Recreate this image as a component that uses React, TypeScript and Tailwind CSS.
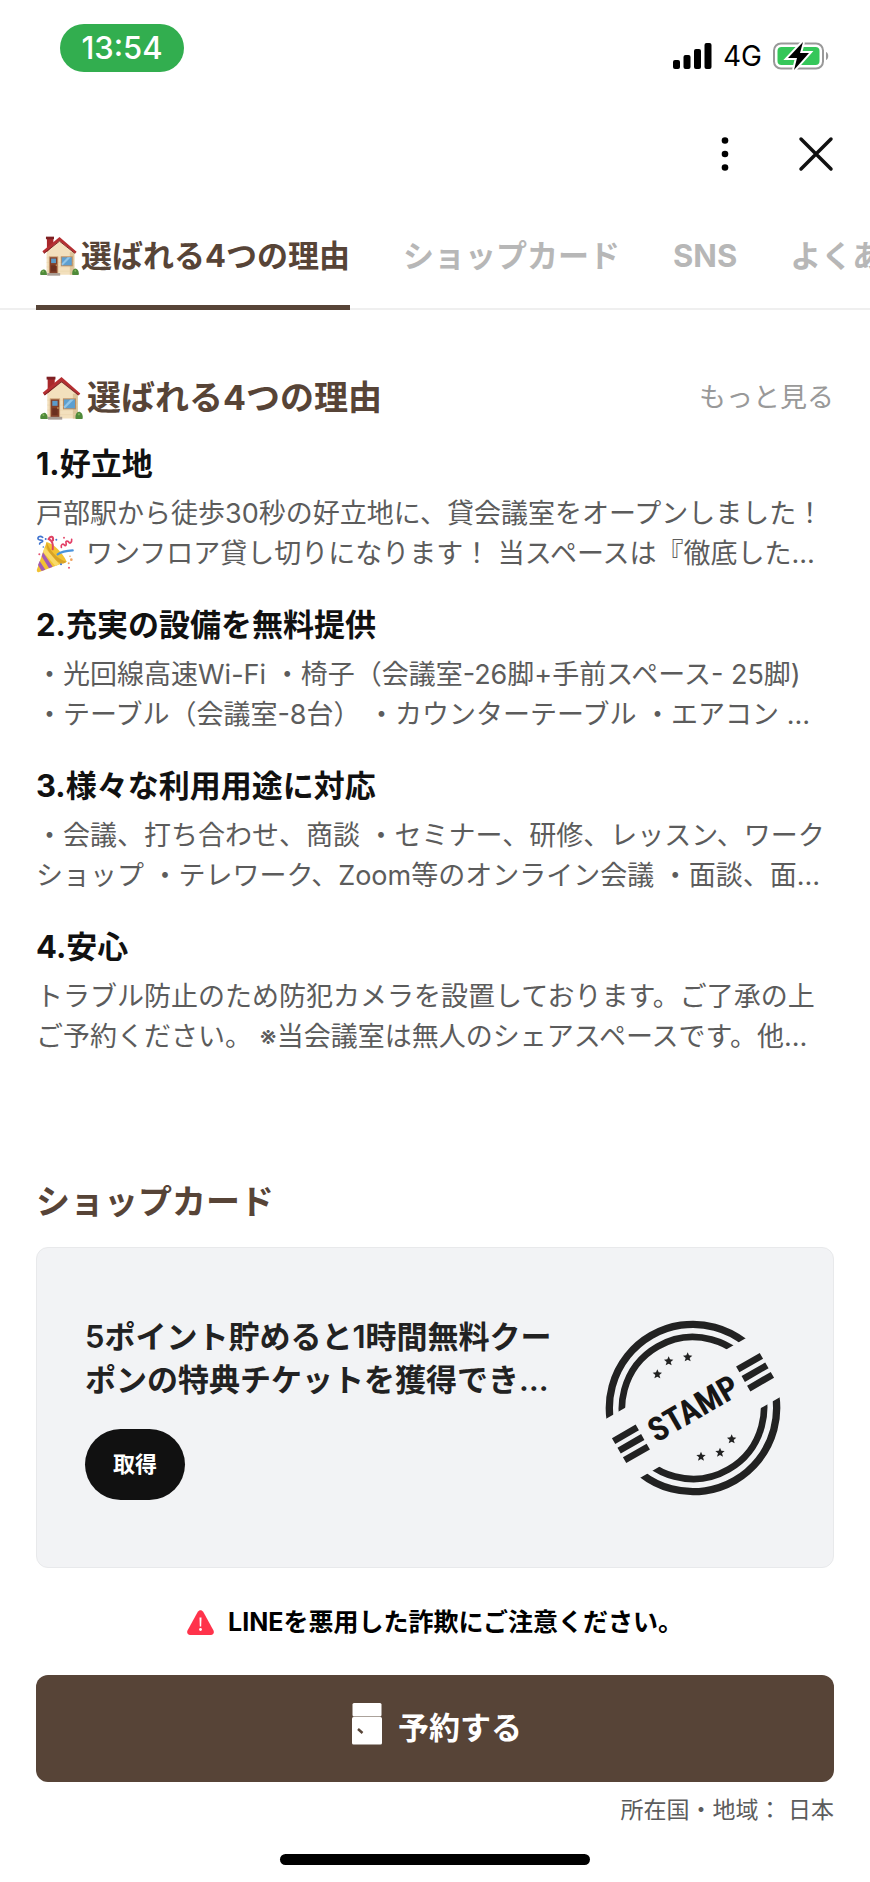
import { useState } from 'react';

const tabs = ['選ばれる4つの理由', 'ショップカード', 'SNS', 'よくある質問'];

const reasons = [
  {
    title: '1.好立地',
    lines: [
      '戸部駅から徒歩30秒の好立地に、貸会議室をオープンしました！',
      'ワンフロア貸し切りになります！ 当スペースは『徹底した…',
    ],
    party: true,
  },
  {
    title: '2.充実の設備を無料提供',
    lines: [
      '・光回線高速Wi-Fi ・椅子（会議室-26脚+手前スペース- 25脚)',
      '・テーブル（会議室-8台） ・カウンターテーブル ・エアコン …',
    ],
  },
  {
    title: '3.様々な利用用途に対応',
    lines: [
      '・会議、打ち合わせ、商談 ・セミナー、研修、レッスン、ワーク',
      'ショップ ・テレワーク、Zoom等のオンライン会議 ・面談、面…',
    ],
  },
  {
    title: '4.安心',
    lines: [
      'トラブル防止のため防犯カメラを設置しております。ご了承の上',
      'ご予約ください。 ※当会議室は無人のシェアスペースです。他…',
    ],
  },
];

const HouseIcon = ({ className }: { className: string }) => (
  <svg viewBox="26 30 120 124" className={className} aria-hidden="true">
    <path d="M47 35h20v30L47 82z" fill="#a8292b" />
    <path d="M44 32h25v8H44z" fill="#7e2023" />
    <path d="M46 80 86 42l46 38v70H46z" fill="#f3e0bd" />
    <path d="M118 80h14v70h-14z" fill="#dcc49a" />
    <path d="M46 98h86M46 112h86M46 126h86M46 139h86" stroke="#e6d0a8" strokeWidth="1.5" />
    <path d="M33 77 86 33l53 46-4 5-49-39-48 39z" fill="#b62f32" />
    <path d="M38 84 86 46l48 38" fill="none" stroke="#7c2122" strokeWidth="3" />
    <path d="M53 93h29v53H53z" fill="#c99e73" />
    <path d="M56 96h23v50H56z" fill="#834028" />
    <path d="M60 100h15v14H60z" fill="#5b9bc9" />
    <path d="M60 121h15v19H60z" fill="#6b301f" />
    <circle cx="76" cy="120" r="2" fill="#efc36c" />
    <path d="M90 93h37v31H90z" fill="#b98b60" />
    <path d="M93 96h31v25H93z" fill="#5d9fd0" />
    <path d="m93 115 18-19h10L96 121h-3z" fill="#91c5e8" />
    <path d="M48 145h40v8H48z" fill="#a89d95" />
    <path d="M27 151c-3-9 2-16 9-17 6-1 12 6 11 17z" fill="#4f8a3a" />
    <path d="M126 151c-2-9 1-19 9-20 8 0 13 11 10 20z" fill="#4f8a3a" />
    <circle cx="35" cy="140" r="3" fill="#7fb357" />
    <circle cx="135" cy="138" r="3" fill="#7fb357" />
  </svg>
);

const PartyIcon = () => (
  <svg
    viewBox="22 26 114 114"
    className="mr-3 inline-block size-[38px] align-middle"
    aria-hidden="true"
  >
    <path d="M54 47c20 5 48 32 60 59L32 137c-6 2-9-2-7-8z" fill="#f2c233" />
    <path d="M54 47c8 24 30 51 60 59-9 8-20 7-33-4-17-15-31-39-27-55z" fill="#d9a326" />
    <path d="m48 63 44 51-12 5-37-42z" fill="#f9da68" />
    <path d="m43 78 29 43-11 5-22-36zM33 104l17 26-11 4-11-18z" fill="#a35bb4" />
    <path
      d="M42 33c-9-6-17 0-13 6 4 5 12 0 13 5s-10 3-9 9"
      fill="none"
      stroke="#3f73cf"
      strokeWidth="5"
      strokeLinecap="round"
    />
    <path
      d="M72 69c2-12-1-26-12-31 5-11 15-8 13 4"
      fill="none"
      stroke="#df4264"
      strokeWidth="6"
      strokeLinecap="round"
    />
    <path
      d="M98 63c-2-9 5-12 9-7s7-1 5-7 7-6 9-1 9 1 8-9"
      fill="none"
      stroke="#e33e66"
      strokeWidth="5"
      strokeLinecap="round"
    />
    <path
      d="M87 84c11-8 27-11 45-12"
      fill="none"
      stroke="#4b94dc"
      strokeWidth="7"
      strokeLinecap="round"
    />
    <g fill="#e55271">
      <circle cx="106" cy="34" r="3" />
      <circle cx="32" cy="84" r="3" />
      <circle cx="121" cy="124" r="3" />
    </g>
    <g fill="#4273cf">
      <circle cx="83" cy="40" r="3" />
      <circle cx="51" cy="38" r="3" />
      <circle cx="97" cy="114" r="3" />
      <circle cx="44" cy="62" r="2.5" />
    </g>
    <g fill="#efa35f">
      <circle cx="128" cy="100" r="4" />
      <circle cx="120" cy="111" r="3" />
      <circle cx="124" cy="90" r="2.5" />
    </g>
  </svg>
);

const stars = [
  [232, 249],
  [266, 210],
  [323, 198],
  [363, 496],
  [420, 484],
  [455, 444],
];

const StampIcon = () => (
  <svg
    viewBox="72 84 534 534"
    className="size-[178px] shrink-0"
    role="img"
    aria-label="STAMP"
  >
    <defs>
      <clipPath id="stampBand">
        <path d="M-300-300h600v198h-600zM-300 102h600v198h-600z" />
      </clipPath>
    </defs>
    <g transform="translate(339 351) rotate(-30)">
      <g fill="none" stroke="#222" clipPath="url(#stampBand)">
        <circle r="251" strokeWidth="22" />
        <circle r="213" strokeWidth="20" />
      </g>
      <path
        d="M174-33h82M174 0h82M174 33h82M-256-33h82M-256 0h82M-256 33h82"
        stroke="#222"
        strokeWidth="20"
      />
      <text
        y="36"
        textAnchor="middle"
        fill="#161616"
        className="font-['Liberation_Sans_Narrow','Roboto_Condensed','Roboto','Liberation_Sans',sans-serif] text-[100px] font-bold"
      >
        STAMP
      </text>
    </g>
    {stars.map(([x, y]) => (
      <path
        key={x}
        transform={`translate(${x} ${y})`}
        d="M0-14 4-5 14-4 6 3 9 13 0 8-9 13-6 3-14-4-4-5z"
        fill="#222"
      />
    ))}
  </svg>
);

const StatusBar = () => (
  <div className="flex h-24 items-start justify-between pt-6 pr-10 pl-[60px]">
    <div className="flex h-12 w-[124px] items-center justify-center rounded-full bg-[#32ae4f] text-[31px] font-medium text-white">
      13:54
    </div>
    <div className="flex h-16 items-center gap-[11px]">
      <svg viewBox="0 0 39 26" className="h-[26px] w-[39px]" aria-hidden="true">
        <rect y="17" width="7" height="9" rx="2" />
        <rect x="10.5" y="12" width="7" height="14" rx="2" />
        <rect x="21" y="6" width="7" height="20" rx="2" />
        <rect x="31.5" width="7" height="26" rx="2" />
      </svg>
      <span className="text-[28px]">4G</span>
      <svg viewBox="0 0 57 28" className="h-7 w-[57px]" aria-hidden="true">
        <rect x="1" y="1.5" width="49" height="25" rx="7" fill="none" stroke="#999" strokeWidth="2" />
        <rect x="4.500" y="5" width="42" height="18" rx="4" fill="#35c759" />
        <path d="M53 10c3 1 3 7 0 8z" fill="#999" />
        <path
          d="M30 0 15 16h9l-3 12 15-17h-9z"
          stroke="#fff"
          strokeWidth="4"
          paintOrder="stroke"
        />
      </svg>
    </div>
  </div>
);

const App = () => {
  const [active, setActive] = useState(tabs[0]);

  return (
    <div
      lang="ja"
      className="w-full overflow-hidden bg-white font-['Inter','Noto_Sans_CJK_JP',sans-serif] text-black"
    >
      <StatusBar />

      <div className="flex h-[116px] items-center justify-end gap-[58px] pr-[34px]">
        <button type="button" aria-label="メニュー" className="px-2">
          <svg viewBox="0 0 10 36" className="h-9 w-2.5" aria-hidden="true">
            <circle cx="5" cy="4.500" r="3.300" />
            <circle cx="5" cy="18" r="3.300" />
            <circle cx="5" cy="31.500" r="3.300" />
          </svg>
        </button>
        <button type="button" aria-label="閉じる">
          <svg viewBox="0 0 40 36" className="h-9 w-10" aria-hidden="true">
            <path
              d="m5 3 30 30M35 3 5 33"
              stroke="#111"
              strokeWidth="3.500"
              strokeLinecap="round"
            />
          </svg>
        </button>
      </div>

      <nav className="flex gap-[53px] overflow-hidden pl-9 shadow-[inset_0_-2px_0_#efefef]">
        {tabs.map((tab, i) => (
          <button
            key={tab}
            type="button"
            onClick={() => setActive(tab)}
            className={`flex shrink-0 items-center border-b-[5px] pt-6 pb-[29px] text-[31px] leading-10 font-bold whitespace-nowrap ${
              active === tab
                ? 'border-[#574437] text-[#574437]'
                : 'border-transparent text-[#b7b7b7]'
            }`}
          >
            {i === 0 && <HouseIcon className="mr-0.5 ml-1 h-10 w-[39px]" />}
            {tab}
          </button>
        ))}
      </nav>

      <main className="px-9">
        <section>
          <div className="flex items-center justify-between pt-16">
            <h2 className="flex items-center text-[34px] leading-12 font-bold text-[#574437]">
              <HouseIcon className="mr-1 ml-1 h-11 w-[43px]" />
              選ばれる4つの理由
            </h2>
            <a href="#reasons" className="text-[27px] leading-10 text-[#999]">
              もっと見る
            </a>
          </div>
          <ul id="reasons" className="mt-[22px] flex flex-col gap-[31px]">
            {reasons.map((item) => (
              <li key={item.title}>
                <h3 className="text-[31px] leading-10 font-bold text-[#111]">
                  {item.title}
                </h3>
                <p className="mt-2.5 text-[27px] leading-10 whitespace-nowrap text-[#5c5c5c]">
                  <span className="block h-10">{item.lines[0]}</span>
                  <span className="flex h-10 items-center">
                    {item.party && <PartyIcon />}
                    {item.lines[1]}
                  </span>
                </p>
              </li>
            ))}
          </ul>
        </section>

        <section className="pt-[121px]">
          <h2 className="text-[34px] leading-12 font-bold text-[#574437]">
            ショップカード
          </h2>
          <div className="mt-[21px] flex items-center justify-between rounded-xl border border-[#e8e9eb] bg-[#f2f3f5] py-[67px] pr-[51px] pl-12">
            <div>
              <p className="text-[31px] leading-[43px] font-semibold whitespace-nowrap text-[#222]">
                5ポイント貯めると1時間無料クー
                <br />
                ポンの特典チケットを獲得でき…
              </p>
              <button
                type="button"
                className="mt-7 h-[71px] rounded-full bg-[#111] px-7 text-[22px] font-semibold text-white"
              >
                取得
              </button>
            </div>
            <StampIcon />
          </div>
        </section>

        <p className="mt-9 flex items-center justify-center gap-3.5 text-[25px] leading-9 font-bold">
          <svg viewBox="0 0 27 25" className="h-[25px] w-[27px]" aria-hidden="true">
            <path
              d="M10.800 1.800c1.300-2.200 4.100-2.200 5.400 0l10.300 18.700c1 2-.2 4.500-2.600 4.500H3.100C.7 25-.5 22.500.5 20.500z"
              fill="#ff334b"
            />
            <path d="M12.500 7.500h2l-.3 9h-1.400z" fill="#fff" />
            <circle cx="13.500" cy="19.500" r="1.400" fill="#fff" />
          </svg>
          LINEを悪用した詐欺にご注意ください。
        </p>

        <button
          type="button"
          className="mt-[35px] flex h-[107px] w-full items-center justify-center gap-4 rounded-xl bg-[#574437] pl-1 text-[31px] font-bold text-white"
        >
          <svg viewBox="0 0 30 54" className="h-[54px] w-[30px]" aria-hidden="true">
            <rect x=".5" y="1" width="29" height="13.500" rx="1.500" fill="#fff" />
            <rect y="15" width="30" height="27.500" rx="1.500" fill="#fff" />
            <path d="m6 27 4.500 4" stroke="#574437" strokeWidth="2.500" />
          </svg>
          予約する
        </button>

        <p className="mt-3 text-right text-[23px] leading-8 text-[#5c5c5c]">
          所在国・地域： 日本
        </p>
      </main>

      <div className="mx-auto mt-7 mb-[17px] h-[11px] w-[310px] rounded-full bg-black" />
    </div>
  );
};

export default App;
